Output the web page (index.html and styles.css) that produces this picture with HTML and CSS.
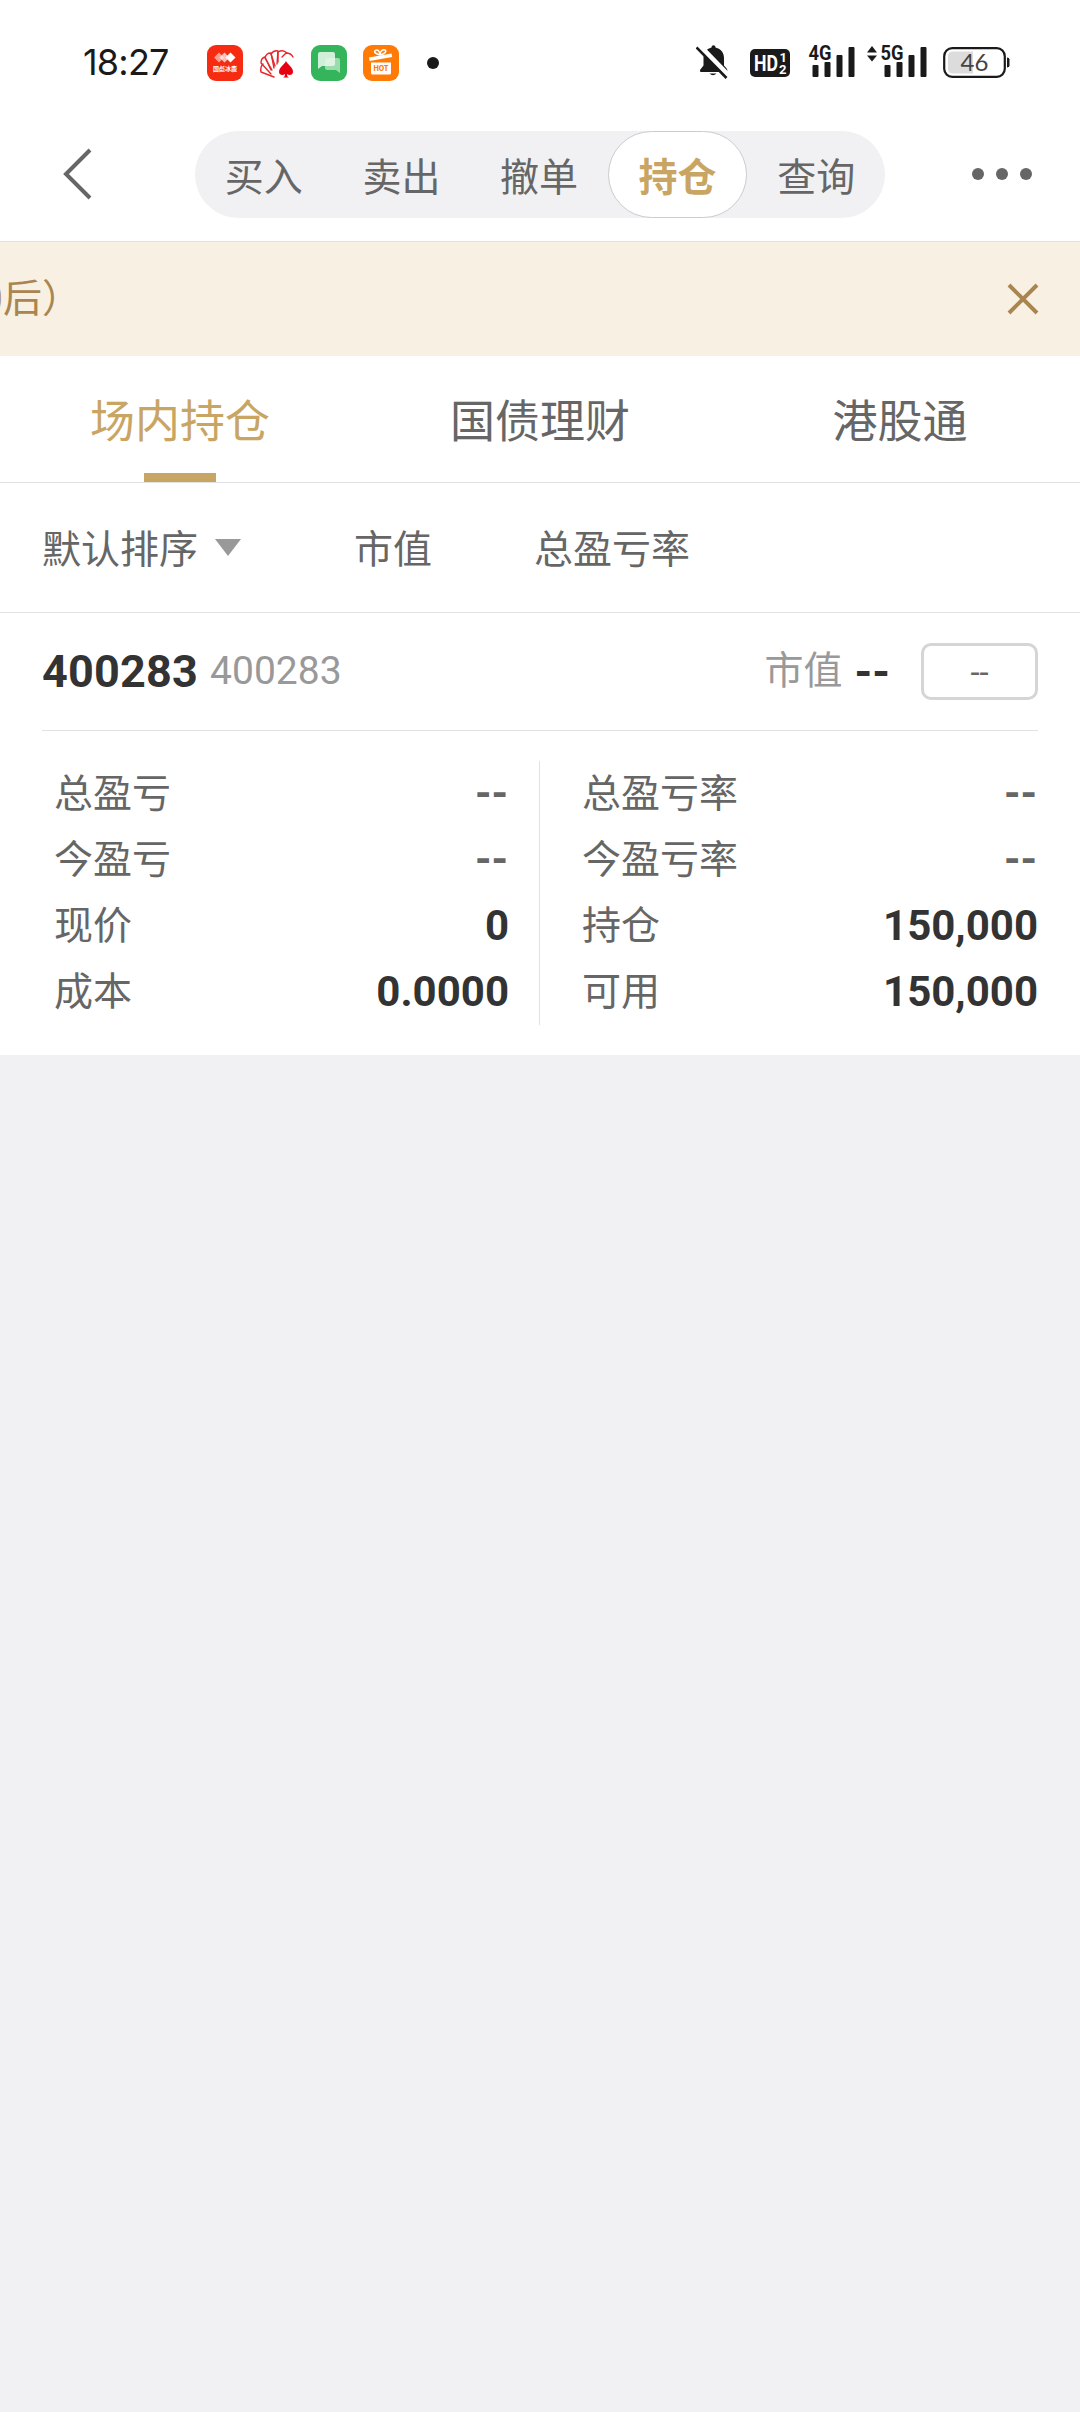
FILE: index.html
```html
<!DOCTYPE html>
<html lang="zh-CN">
<head>
<meta charset="utf-8">
<title>持仓</title>
<link rel="stylesheet" href="styles.css">
</head>
<body>
<header class="status">
  <span class="clock">18:27</span>
  <div class="apps">
    <svg class="app" viewBox="0 0 36 36">
      <rect width="36" height="36" rx="9" fill="#f62c12"/>
      <path d="M7 12.500l5-5 5 5-5 5z" fill="#fff" opacity=".55"/>
      <path d="M12.500 12.500l5-5 5 5-5 5z" fill="#fff" opacity=".7"/>
      <path d="M18.500 12.500l5-5 5 5-5 5z" fill="#fff"/>
      <text x="18" y="26" class="app-brand">国彪冰鹿</text>
    </svg>
    <svg class="app" viewBox="0 0 36 36">
      <g fill="none" stroke="#e5292c" stroke-width="1.400" stroke-linejoin="round" stroke-linecap="round">
        <path d="M15 32L2 27q-1-5 2-8"/>
        <path d="M12 29L2 18q0-5 4-6l6 13"/>
        <path d="M13 25L6 13q1-5 6-5l3 15"/>
        <path d="M16 21L12 9q3-4 7-3l-1 13"/>
        <path d="M19 17L19 7q5-3 9 1"/>
        <path d="M23 12L27 8q5 0 7 4"/>
      </g>
      <path d="M27 16c2 4 7 6 7 11 0 3-4 4-6 2 0 2 .5 3 2 3.500h-6c1.500-.5 2-1.500 2-3.500-2 2-6 1-6-2 0-5 5-7 7-11z" fill="#e60012"/>
    </svg>
    <svg class="app" viewBox="0 0 36 36">
      <rect width="36" height="36" rx="9" fill="#34b55c"/>
      <path d="M16 13h11q2 0 2 2v13l-4-3h-9q-2 0-2-2v-8q0-2 2-2z" fill="#9bdcae"/>
      <path d="M9 7h13q2 0 2 2v10q0 2-2 2h-11l-4 3V9q0-2 2-2z" fill="#e6f7eb" opacity=".88"/>
    </svg>
    <svg class="app" viewBox="0 0 36 36">
      <rect width="36" height="36" rx="9" fill="#ff7b05"/>
      <path d="M6 12.500l22.500-4 .7 3.500L6.700 16z" fill="#fff"/>
      <path d="M17 10c-4-1-7-3-4.500-4.500S17 7 17 10c0-4 3-6 5-5s0 4-5 5" fill="none" stroke="#fff" stroke-width="1.500"/>
      <path d="M8 17.500h20V28q0 1.500-1.500 1.500h-17Q8 29.500 8 28z" fill="#fff"/>
      <text x="18" y="26" class="app-hot">HOT</text>
    </svg>
    <i class="more-dot"></i>
  </div>
  <svg class="system" viewBox="0 0 320 40" fill="#1a1a1a">
    <path d="M5 32q-1.500 0-1-2l3.500-4.500V18c0-5 2.500-9 8-10.500 0-3 4-3 4 0 6 1.500 8.500 5.500 8.500 10.500v7.500L31 29q1 3-1 3zM13.500 33.500h7q-3.500 3.500-7 0z"/>
    <path d="M3 5l30 31" stroke="#fff" stroke-width="5"/>
    <path d="M0.500 7.500L30.500 38" stroke="#1a1a1a" stroke-width="2.600"/>
    <rect x="54" y="9" width="40" height="28" rx="5"/>
    <text x="58" y="31" class="hd" textLength="24" lengthAdjust="spacingAndGlyphs">HD</text>
    <text x="83.500" y="22" class="hd-sub">1</text>
    <text x="83" y="34" class="hd-sub">2</text>
    <g>
      <text x="112.500" y="20" class="net" textLength="23" lengthAdjust="spacingAndGlyphs">4G</text>
      <rect x="116.500" y="25" width="6" height="12" rx="1"/>
      <rect x="128.500" y="22" width="6" height="15" rx="1"/>
      <rect x="140.500" y="15" width="6" height="22" rx="1"/>
      <rect x="152.500" y="7" width="6" height="30" rx="1"/>
    </g>
    <path d="M171 12.500l5-6.500 5 6.500zM171 15.500h10l-5 6z"/>
    <g>
      <text x="184.500" y="20" class="net" textLength="23" lengthAdjust="spacingAndGlyphs">5G</text>
      <rect x="188.500" y="25" width="6" height="12" rx="1"/>
      <rect x="200.500" y="22" width="6" height="15" rx="1"/>
      <rect x="212.500" y="15" width="6" height="22" rx="1"/>
      <rect x="224.500" y="7" width="6" height="30" rx="1"/>
    </g>
    <rect x="248.200" y="8.200" width="60.600" height="28.600" rx="8" fill="#fff" stroke="#1a1a1a" stroke-width="2.200"/>
    <path d="M257 11.500h20v22h-20q-5 0-5-5v-12q0-5 5-5z" fill="#dcdcdc"/>
    <path d="M311 17.500q2.500 0 2.500 2v6q0 2-2.500 2z"/>
    <text x="278.500" y="31" class="battery">46</text>
  </svg>
</header>

<nav class="topbar">
  <svg class="back" viewBox="0 0 32 54"><path d="M29 3L5 27l24 24" fill="none" stroke="#666" stroke-width="4"/></svg>
  <div class="segments">
    <a>买入</a><a>卖出</a><a>撤单</a><a class="active">持仓</a><a>查询</a>
  </div>
  <div class="menu"><i></i><i></i><i></i></div>
</nav>

<div class="notice">
  <span class="notice-text">0后）</span>
  <svg class="close" viewBox="0 0 32 32"><path d="M2 2l28 28M30 2L2 30" stroke="#a98650" stroke-width="4"/></svg>
</div>

<div class="tabs">
  <a class="active">场内持仓</a><a>国债理财</a><a>港股通</a>
</div>

<div class="filters">
  <span class="sort">默认排序<i class="caret"></i></span>
  <span class="by-value">市值</span>
  <span>总盈亏率</span>
</div>

<section class="holding">
  <div class="holding-head">
    <b class="name">400283</b>
    <span class="code">400283</span>
    <span class="mv-label">市值</span>
    <b class="mv">--</b>
    <span class="badge">--</span>
  </div>
  <div class="details">
    <dl>
      <div><dt>总盈亏</dt><dd class="empty">--</dd></div>
      <div><dt>今盈亏</dt><dd class="empty">--</dd></div>
      <div><dt>现价</dt><dd>0</dd></div>
      <div><dt>成本</dt><dd>0.0000</dd></div>
    </dl>
    <dl>
      <div><dt>总盈亏率</dt><dd class="empty">--</dd></div>
      <div><dt>今盈亏率</dt><dd class="empty">--</dd></div>
      <div><dt>持仓</dt><dd>150,000</dd></div>
      <div><dt>可用</dt><dd>150,000</dd></div>
    </dl>
  </div>
</section>
</body>
</html>
```
FILE: styles.css
```css
* { box-sizing: border-box; }
body {
  margin: 0;
  width: 1080px;
  min-height: 2412px;
  background: #f1f1f4;
  color: #666;
  font: 39px/1 Roboto, "Noto Sans CJK SC", sans-serif;
}
svg { display: block; flex: none; }

.status {
  display: flex;
  align-items: center;
  height: 124px;
  padding: 0 64px 0 83px;
  background: #fff;
}
.clock {
  width: 124px;
  color: #1a1a1a;
  font: 36px/1 Inter, sans-serif;
  letter-spacing: -.8px;
  white-space: nowrap;
}
.apps { display: flex; align-items: center; gap: 16px; margin-top: 2px; }
.app { width: 36px; height: 36px; }
.app-brand { font: 700 6px "Noto Sans CJK SC", sans-serif; fill: #fff; text-anchor: middle; }
.app-hot { font: 800 7px Inter, sans-serif; fill: #ff7b05; text-anchor: middle; }
.more-dot { width: 12px; height: 12px; margin-left: 12px; border-radius: 50%; background: #1a1a1a; }
.system { width: 320px; height: 40px; margin: 0 0 4px auto; }
.hd { font: 700 22px Roboto, sans-serif; fill: #fff; }
.hd-sub { font: 700 13px Roboto, sans-serif; fill: #fff; }
.net { font: 700 20px Roboto, sans-serif; }
.battery { font: 24px Lato, sans-serif; fill: #444; text-anchor: middle; }

.topbar {
  display: flex;
  align-items: flex-start;
  height: 118px;
  padding: 7px 48px 0 61px;
  background: #fff;
  border-bottom: 1px solid #e2e2e2;
}
.back { width: 32px; height: 54px; margin: 16px 102px 0 0; }
.segments { display: flex; width: 690px; height: 87px; border-radius: 44px; background: #f1f1f4; }
.segments a { flex: 1; text-align: center; line-height: 94px; }
.segments .active {
  border: 1px solid #ccc;
  border-radius: 44px;
  background: #fff;
  color: #c9a563;
  font-weight: 700;
  line-height: 92px;
}
.menu { display: flex; gap: 12px; margin: 37px 0 0 auto; }
.menu i { width: 12px; height: 12px; border-radius: 50%; background: #666; }

.notice {
  display: flex;
  align-items: center;
  justify-content: space-between;
  height: 114px;
  padding-right: 41px;
  overflow: hidden;
  background: #f9f0e4;
  color: #a98650;
}
.notice-text { margin-left: -19px; white-space: nowrap; }
.close { width: 32px; height: 32px; }

.tabs {
  display: grid;
  grid-template-columns: repeat(3, 1fr);
  height: 127px;
  background: #fff;
  border-bottom: 1px solid #e2e2e2;
}
.tabs a { display: flex; flex-direction: column; align-items: center; padding-top: 7px; font-size: 45px; line-height: 119px; }
.tabs .active { color: #c9a563; }
.tabs .active::after { content: ""; width: 72px; height: 9px; margin-top: -9px; background: #c9a563; }

.filters {
  display: flex;
  align-items: center;
  height: 130px;
  padding: 6px 0 0 42px;
  background: #fff;
  border-bottom: 1px solid #e2e2e2;
}
.sort { display: flex; align-items: center; width: 312px; }
.caret { margin: 0 0 6px 17px; border: 13px solid transparent; border-top: 17px solid #999; border-bottom: 0; }
.by-value { width: 180px; }

.holding { padding: 0 42px 30px; background: #fff; }
.holding-head { display: flex; align-items: center; height: 118px; border-bottom: 1px solid #e2e2e2; }
.name { color: #333; font-size: 45px; letter-spacing: .2px; }
.code { margin-left: 12px; color: #999; }
.mv-label { margin-left: auto; color: #999; }
.mv { margin-left: 12px; color: #333; font-size: 45px; }
.badge {
  width: 117px;
  height: 57px;
  margin-left: 31px;
  border: 3px solid #d5d5d5;
  border-radius: 10px;
  text-align: center;
  font-size: 33px;
  line-height: 54px;
}
.details { display: flex; padding-top: 30px; }
dl { margin: 0; width: 498px; padding: 0 30px 0 12px; border-right: 1px solid #e2e2e2; }
dl + dl { padding: 0 0 0 42px; border: 0; }
dl div { display: flex; justify-content: space-between; height: 66px; line-height: 66px; }
dt, dd { margin: 0; }
dd { color: #333; font-size: 42px; font-weight: 700; }
dd.empty { padding-right: 1px; color: #666; }
```
